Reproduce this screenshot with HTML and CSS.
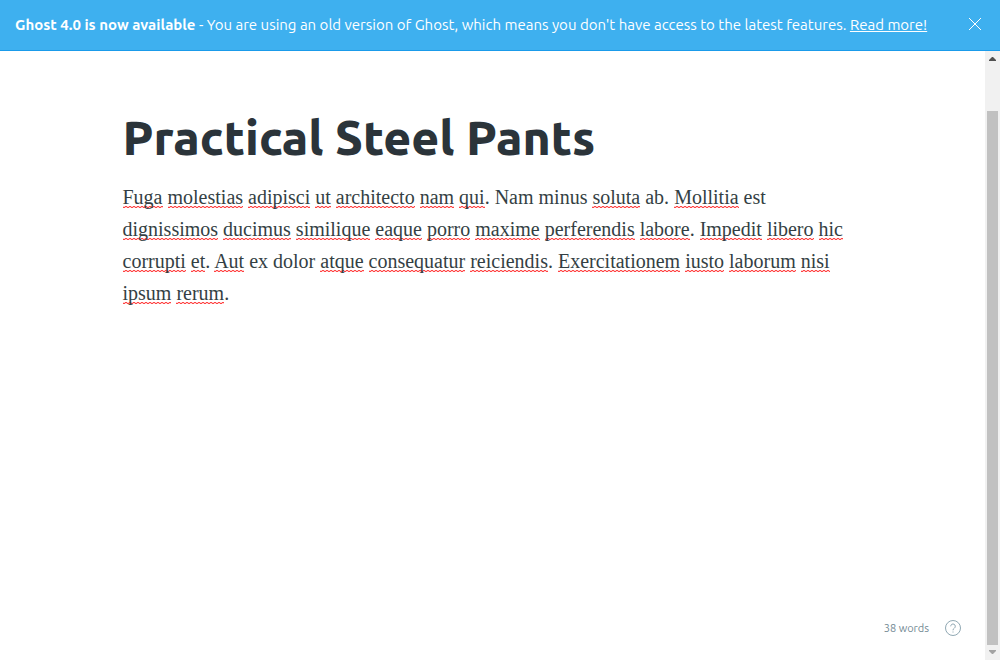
FILE: index.html
```html
<!DOCTYPE html>
<html lang="en">
<head>
<meta charset="utf-8">
<title>Practical Steel Pants</title>
<link rel="stylesheet" href="styles.css">
</head>
<body>
<aside class="alert">
  <p class="alert-text"><b>Ghost 4.0 is now available</b> - You are using an old version of Ghost, which means you don't have access to the latest features. <a href="#">Read more!</a></p>
  <button class="alert-close" type="button" aria-label="Close">
    <svg viewBox="0 0 12 12" width="12" height="12"><path d="M0 0 12 12M12 0 0 12"/></svg>
  </button>
</aside>
<div class="workspace">
  <main class="editor">
    <div class="page">
      <input class="title" type="text" aria-label="Post title" value="Practical Steel Pants" spellcheck="false">
      <div class="body" role="textbox" aria-label="Post body" contenteditable="true" spellcheck="false"><p><u>Fuga</u> <u>molestias</u> <u>adipisci</u> <u>ut</u> <u>architecto</u> <u>nam</u> <u>qui</u>. Nam minus <u>soluta</u> ab. <u>Mollitia</u> est <u>dignissimos</u> <u>ducimus</u> <u>similique</u> <u>eaque</u> <u>porro</u> <u>maxime</u> <u>perferendis</u> <u>labore</u>. <u>Impedit</u> <u>libero</u> <u>hic</u> <u>corrupti</u> <u>et</u>. <u>Aut</u> ex dolor <u>atque</u> <u>consequatur</u> <u>reiciendis</u>. <u>Exercitationem</u> <u>iusto</u> <u>laborum</u> <u>nisi</u> <u>ipsum</u> <u>rerum</u>.</p></div>
    </div>
    <footer class="status">
      <span>38 words</span>
      <a class="help" href="#" aria-label="Help">
        <svg viewBox="0 0 16 16" width="16" height="16"><circle cx="8" cy="8" r="7.5"/><path d="M5.7 6.3a2.3 2.3 0 1 1 3.6 1.9C8.400 8.800 8 9.200 8 10.300M8 11.500v1"/></svg>
      </a>
    </footer>
  </main>
  <div class="scrollbar" aria-hidden="true">
    <svg class="arrow" viewBox="0 0 7 4" width="7" height="4"><path d="M0 4V3L3 0H4L7 3V4Z"/></svg>
    <div class="track"><div class="thumb"></div></div>
    <svg class="arrow arrow-end" viewBox="0 0 7 4" width="7" height="4"><path d="M0 0V1L3 4H4L7 1V0Z"/></svg>
  </div>
</div>
</body>
</html>
```
FILE: styles.css
```css
* { box-sizing: border-box; }
body {
  margin: 0;
  height: 100vh;
  display: flex;
  flex-direction: column;
  background: #fff;
  color: #343f44;
  font-family: Ubuntu, "Noto Sans", "Open Sans", sans-serif;
}
.alert {
  display: flex;
  align-items: center;
  justify-content: space-between;
  padding: 14px 19px 14px 15px;
  background: #3eb0ef;
  border-bottom: 1px solid #1a9bea;
  color: #fff;
}
.alert-text { margin: 0; font-size: 15px; line-height: 22px; white-space: nowrap; }
.alert-text a { color: #fff; text-decoration: underline; }
.alert-close { display: flex; margin-bottom: 2px; padding: 0; border: 0; background: none; cursor: pointer; }
.alert-close path { stroke: #fff; stroke-width: 1; fill: none; }
.workspace { flex: 1; display: flex; min-height: 0; }
.editor { flex: 1; min-width: 0; display: flex; flex-direction: column; justify-content: space-between; }
.page { width: 100%; max-width: 740px; margin: 0 auto; padding-top: 57px; }
.title {
  display: block;
  width: 100%;
  height: 58px;
  padding: 0;
  border: 0;
  outline: 0;
  background: none;
  color: #2b343a;
  font-family: inherit;
  font-size: 48px;
  font-weight: 800;
}
.body {
  padding-top: 15px;
  outline: 0;
  font-family: "Liberation Serif", serif;
  font-size: 20px;
  line-height: 32px;
}
.body p { margin: 0; }
.body u {
  text-decoration: none;
  background:
    repeating-linear-gradient(90deg, #f44 0 2px, #fcc 2px 4px) 0 100% / 100% 1px no-repeat,
    repeating-linear-gradient(90deg, #fcc 0 2px, #f44 2px 4px) 0 calc(100% - 1px) / 100% 1px no-repeat;
}
.status {
  display: flex;
  align-items: center;
  justify-content: flex-end;
  gap: 16px;
  padding: 0 24px 24px;
  color: #738a94;
  font-size: 11px;
  line-height: 16px;
}
.help { display: flex; }
.help svg { fill: none; stroke: #90a8b3; stroke-width: 1; }
.scrollbar {
  width: 15px;
  display: flex;
  flex-direction: column;
  align-items: center;
  padding: 6px 0;
  background: #f1f1f1;
}
.arrow { fill: #505050; }
.arrow-end { fill: #a3a3a3; }
.track { flex: 1; width: 11px; padding: 50px 0 5px; }
.thumb { height: 100%; background: #c1c1c1; }
```
